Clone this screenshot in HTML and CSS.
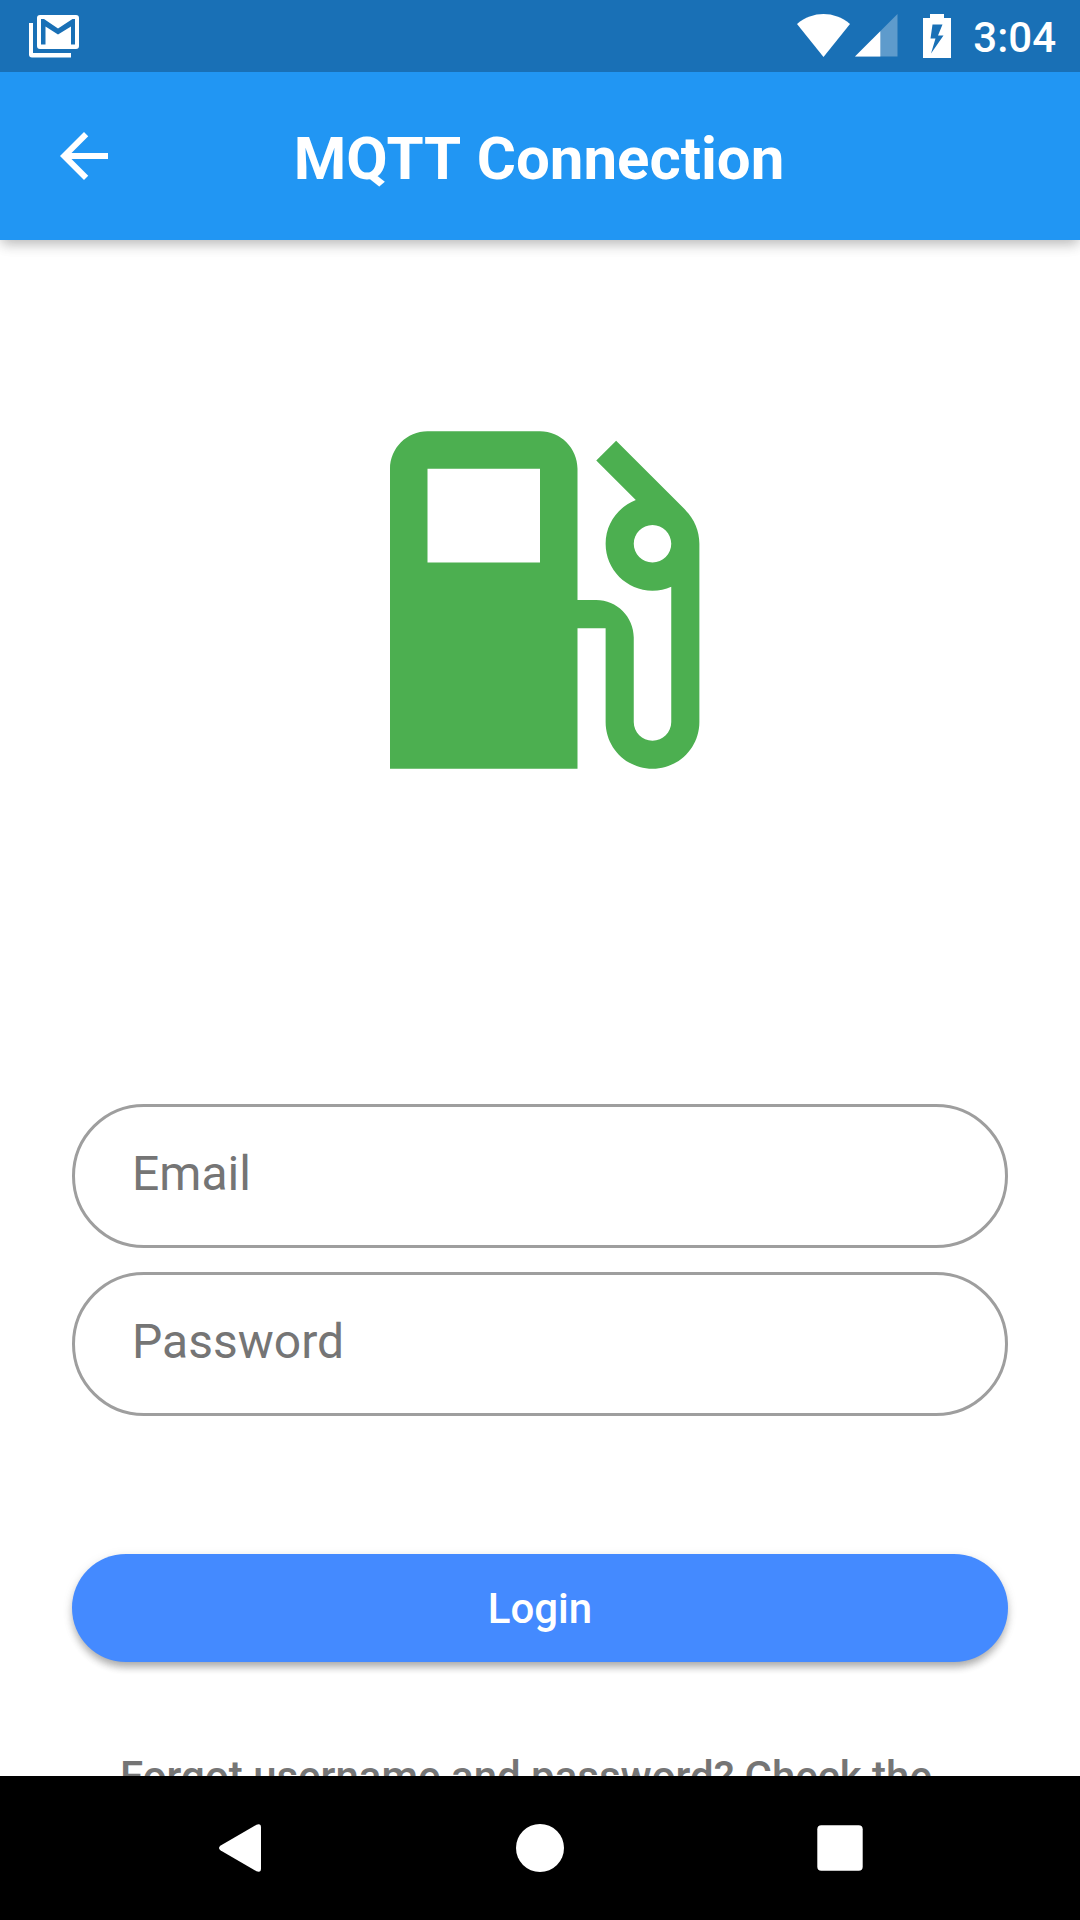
FILE: index.html
```html
<!DOCTYPE html>
<html lang="en">
<head>
<meta charset="utf-8">
<title>MQTT Connection</title>
<link rel="stylesheet" href="styles.css">
</head>
<body>
<div class="screen">
  <div class="status-bar">
    <svg class="mail-icon" width="52" height="44" viewBox="0 0 52 44">
      <path fill="#fff" fill-rule="evenodd" d="M11 0H47Q50 0 50 3V31Q50 34 47 34H11Q8 34 8 31V3Q8 0 11 0ZM12 4V29.500H16.500V11.500L29 19.500L42 11.500V29.500H46V4H43.500L29 13.500L15 4Z"/>
      <path fill="#fff" d="M0 8H4V38H42V42.500H3Q0 42.500 0 39.500Z"/>
    </svg>
    <svg class="wifi-icon" width="54" height="44" viewBox="0 0 54 44"><path fill="#fff" d="M0 10C16-3.200 37-3.200 53 10L26.500 43Z"/></svg>
    <svg class="signal-icon" width="43" height="43" viewBox="0 0 43 43"><path fill="#fff" fill-opacity=".3" d="M42.500 0V42.500H0Z"/><path fill="#fff" d="M25.300 17.200V42.500H0Z"/></svg>
    <svg class="battery-icon" width="28" height="44" viewBox="0 0 28 44"><path fill="#fff" fill-rule="evenodd" d="M7 0H21V4H28V44H0V4H7ZM9.500 10.500L7.500 24.500H12.500L8 39.500L20.500 21.500H15L19.500 10.500Z"/></svg>
    <span class="clock">3:04</span>
  </div>
  <header class="app-bar">
    <svg class="back-icon" width="72" height="72" viewBox="0 0 24 24"><path fill="#fff" d="M20 11H7.830l5.590-5.590L12 4l-8 8 8 8 1.410-1.410L7.830 13H20v-2z"/></svg>
    <h1 class="title">MQTT Connection</h1>
  </header>
  <main class="content">
    <svg class="pump-icon" width="450" height="450" viewBox="0 0 24 24"><path fill="#4caf50" d="M19.770 7.230l.01-.01-3.720-3.720L15 4.560l2.110 2.110c-.94.36-1.610 1.260-1.610 2.330 0 1.380 1.120 2.500 2.500 2.500.36 0 .69-.08 1-.21v7.210c0 .55-.45 1-1 1s-1-.45-1-1V14c0-1.100-.9-2-2-2h-1V5c0-1.100-.9-2-2-2H6c-1.100 0-2 .9-2 2v16h10v-7.500h1.500v5c0 1.380 1.120 2.500 2.500 2.500s2.500-1.120 2.500-2.500V9c0-.69-.28-1.320-.73-1.770zM12 10H6V5h6v5zm6 0c-.55 0-1-.45-1-1s.45-1 1-1 1 .45 1 1-.45 1-1 1z"/></svg>
    <form class="form">
      <input class="field" type="email" placeholder="Email" aria-label="Email">
      <input class="field" type="password" placeholder="Password" aria-label="Password">
      <button class="login" type="button">Login</button>
    </form>
    <p class="hint">Forgot username and password? Check the</p>
  </main>
  <nav class="nav-bar">
    <svg width="48" height="48" viewBox="0 0 48 48"><path fill="#fff" d="M4.700 21.500L40.500.700Q45 -1 45 3.500V44.500Q45 49 40.500 47.300L4.700 26.500Q1.300 24 4.700 21.500Z"/></svg>
    <svg width="48" height="48" viewBox="0 0 48 48"><circle cx="24" cy="24" r="24" fill="#fff"/></svg>
    <svg width="48" height="48" viewBox="0 0 48 48"><rect x="1.300" y="1.300" width="45.400" height="45.400" rx="4" fill="#fff"/></svg>
  </nav>
</div>
</body>
</html>
```
FILE: styles.css
```css
* { box-sizing: border-box; }
body { margin: 0; font-family: Roboto, sans-serif; }
svg { display: block; flex: none; }

.screen {
  width: 1080px;
  height: 1920px;
  display: flex;
  flex-direction: column;
  overflow: hidden;
  background: #fff;
}

.status-bar {
  position: relative;
  z-index: 1;
  height: 72px;
  flex: none;
  display: flex;
  align-items: flex-start;
  padding: 14px 24px 0 29px;
  background: #1970b6;
}
.mail-icon { margin: 1px auto 0 0; }
.wifi-icon { margin-right: 4px; }
.battery-icon { margin: 0 22px 0 25px; }
.clock {
  font-size: 42px;
  font-weight: 500;
  line-height: 48px;
  color: #fff;
}

.app-bar {
  height: 168px;
  flex: none;
  display: grid;
  grid-template-columns: 72px 1fr 72px;
  align-items: center;
  padding: 0 48px;
  background: #2196f3;
  box-shadow: 0 6px 12px -2px rgba(0, 0, 0, .2), 0 2px 16px rgba(0, 0, 0, .12);
}
.title {
  margin: 6px 0 0;
  padding-right: 2px;
  font-size: 60px;
  font-weight: 700;
  line-height: 70px;
  word-spacing: 2px;
  text-align: center;
  color: #fff;
}

.content {
  flex: 1;
  min-height: 0;
  overflow: hidden;
  display: flex;
  flex-direction: column;
  align-items: center;
  padding: 135px 72px 0;
}
.pump-icon { margin-bottom: 279px; }
.form {
  width: 100%;
  display: flex;
  flex-direction: column;
  gap: 24px;
}
.field {
  height: 144px;
  padding: 0 57px 6px;
  border: 3px solid #9e9e9e;
  border-radius: 72px;
  background: transparent;
  font: 400 48px/56px Roboto, sans-serif;
  color: #212121;
}
.field::placeholder { color: #757575; opacity: 1; }
.login {
  height: 108px;
  margin-top: 114px;
  padding: 0;
  border: 0;
  border-radius: 54px;
  background: #448aff;
  box-shadow: 0 7px 9px -3px rgba(0, 0, 0, .2), 0 5px 8px rgba(0, 0, 0, .14), 0 2px 12px rgba(0, 0, 0, .08);
  font: 500 42px/49px Roboto, sans-serif;
  color: #fff;
}
.hint {
  margin: 90px 28px 0 0;
  font-size: 42px;
  font-weight: 500;
  line-height: 49px;
  white-space: nowrap;
  color: #757575;
}

.nav-bar {
  height: 144px;
  flex: none;
  display: flex;
  align-items: center;
  justify-content: center;
  gap: 252px;
  background: #000;
}
```
